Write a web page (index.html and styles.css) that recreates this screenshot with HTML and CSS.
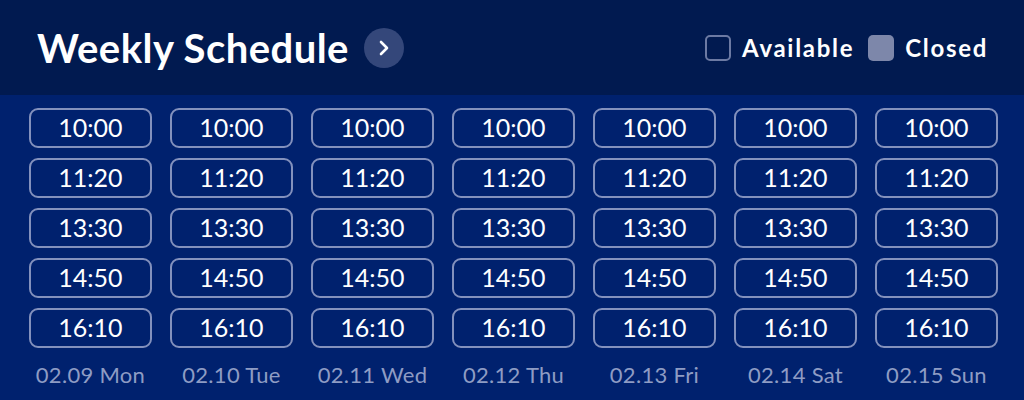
FILE: index.html
```html
<!DOCTYPE html>
<html lang="en">
<head>
  <meta charset="UTF-8">
  <title>Weekly Schedule</title>
  <meta name="viewport" content="width=device-width, initial-scale=1.0" />
  <link rel="stylesheet" href="styles.css">
</head>
<body>
  <header class="top">
    <div class="title-wrap">
      <h1>Weekly Schedule</h1>
      <button class="next" aria-label="Next">
        <svg width="14" height="18" viewBox="0 0 14 18"><path d="M4 3 L10 9 L4 15" fill="none" stroke="#fff" stroke-width="2.6" stroke-linecap="round" stroke-linejoin="round"/></svg>
      </button>
    </div>
    <div class="legend">
      <span class="swatch open"></span><span class="legend-label">Available</span>
      <span class="swatch closed"></span><span class="legend-label">Closed</span>
    </div>
  </header>

  <main class="week" id="week"></main>

  <script>
    const days = ["02.09 Mon", "02.10 Tue", "02.11 Wed", "02.12 Thu", "02.13 Fri", "02.14 Sat", "02.15 Sun"];
    const times = ["10:00", "11:20", "13:30", "14:50", "16:10"];
    const week = document.getElementById("week");
    days.forEach(day => {
      let slots = times.map(t => `<div class="slot">${t}</div>`).join("");
      week.innerHTML += `
        <div class="day">
          ${slots}
          <div class="day-label">${day}</div>
        </div>
      `;
    });
  </script>
</body>
</html>
```

FILE: styles.css
```css
* { box-sizing: border-box; }
body { margin: 0; font-family: "Lato", "Inter", sans-serif; background: #00216e; color: #fff; width: 1024px; height: 400px; overflow: hidden; }

.top { height: 95px; background: #011a50; display: flex; align-items: center; justify-content: space-between; padding: 0 36px 0 37px; }
.title-wrap { display: flex; align-items: center; gap: 15px; }
h1 { margin: 0; font-size: 40px; font-weight: 700; letter-spacing: 0.45px; }
.next { width: 40px; height: 40px; border-radius: 50%; border: none; background: #34477a; display: flex; align-items: center; justify-content: center; padding: 0; }

.legend { display: flex; align-items: center; font-size: 24px; font-weight: 700; letter-spacing: 1.7px; }
.swatch { width: 26px; height: 26px; border-radius: 5px; }
.swatch.open { border: 2px solid #6c7aa3; }
.swatch.closed { background: #7d87aa; margin-left: 14px; }
.legend-label { margin-left: 11px; }

.week { display: flex; gap: 18px; padding: 13px 0 0 29px; }
.day { width: 123px; display: flex; flex-direction: column; gap: 10px; }
.slot { height: 40px; border: 2px solid #8391bd; border-radius: 9px; display: flex; align-items: center; justify-content: center; font-size: 25px; padding-bottom: 3px; }
.day-label { text-align: center; color: #8e9cc4; font-size: 22px; letter-spacing: 0.3px; margin-top: 3px; white-space: nowrap; }
```
